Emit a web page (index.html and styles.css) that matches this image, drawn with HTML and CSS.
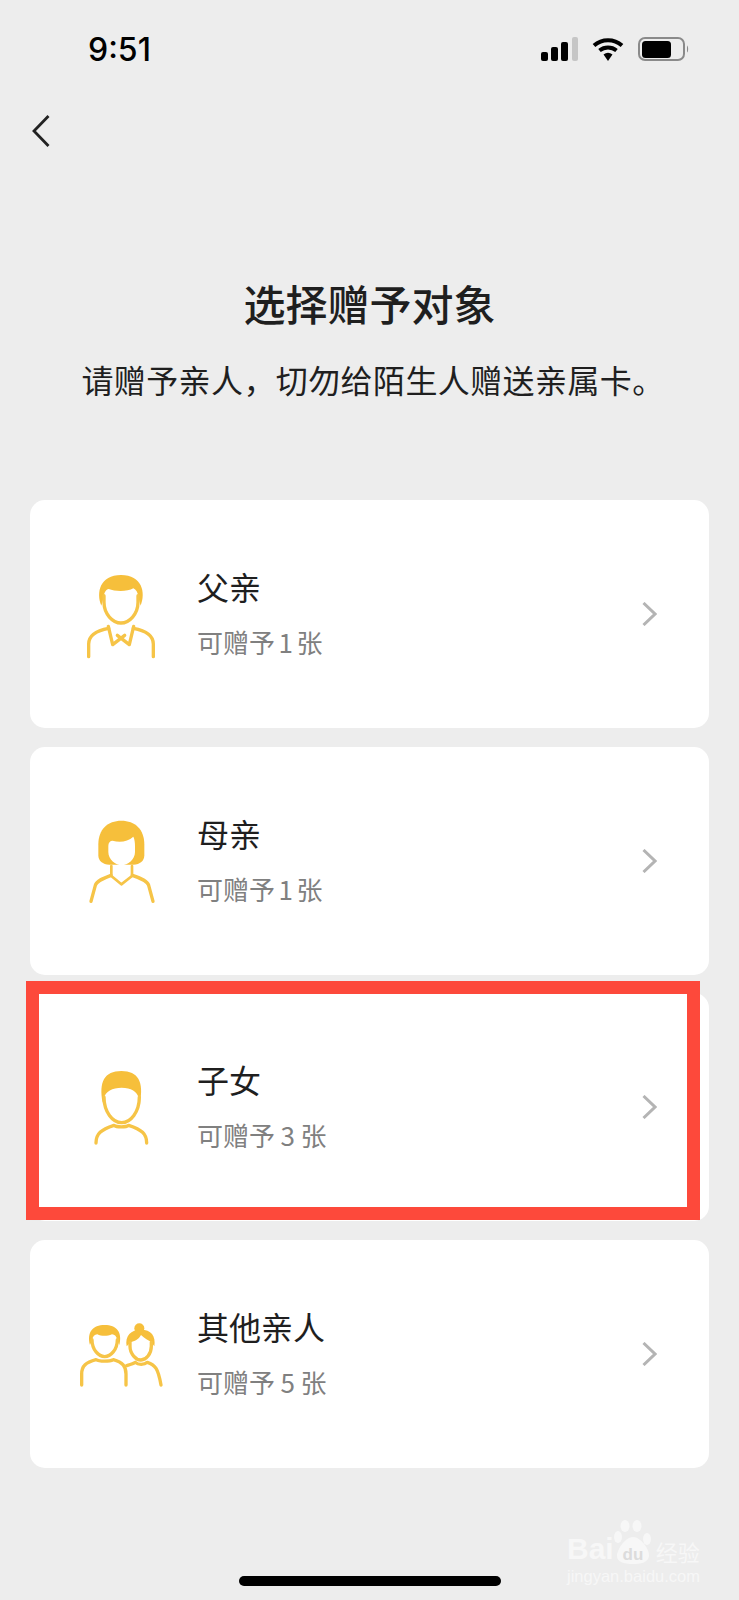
FILE: index.html
```html
<!DOCTYPE html>
<html lang="zh-CN">
<head>
    <meta charset="UTF-8">
    <meta name="viewport" content="width=device-width, initial-scale=1.0">
    <title>选择赠予对象</title>
    <link rel="stylesheet" href="styles.css">
</head>
<body>
    <!-- Status bar -->
    <div class="status-bar">
        <span class="time">9:51</span>
        <div class="status-icons">
            <svg class="signal" width="37" height="24" viewBox="0 0 37 24">
                <rect x="0" y="15" width="7" height="9" rx="2" fill="#000"/>
                <rect x="10" y="10" width="7" height="14" rx="2" fill="#000"/>
                <rect x="20" y="5" width="7" height="19" rx="2" fill="#000"/>
                <rect x="31" y="0" width="6" height="24" rx="2" fill="#c6c6c6"/>
            </svg>
            <svg class="wifi" width="32" height="24" viewBox="0 0 32 24">
                <path d="M2 8.500C10 1.500 22 1.500 30 8.500" fill="none" stroke="#000" stroke-width="4"/>
                <path d="M7.500 13.500C12.500 9.500 19.500 9.500 24.500 13.500" fill="none" stroke="#000" stroke-width="4"/>
                <path d="M11.500 17.500C14.500 15.300 17.500 15.300 20.500 17.500L16 24Z" fill="#000"/>
            </svg>
            <svg class="battery" width="51" height="24" viewBox="0 0 51 24">
                <rect x="1" y="1" width="45" height="22" rx="6" fill="none" stroke="#8a8a8a" stroke-width="2"/>
                <rect x="4" y="4" width="29" height="17" rx="3.500" fill="#000"/>
                <path d="M49 8.500C50.500 9.500 50.500 14.500 49 15.500Z" fill="#8a8a8a"/>
            </svg>
        </div>
    </div>

    <!-- Back button -->
    <div class="nav">
        <svg width="18" height="32" viewBox="0 0 18 32">
            <path d="M16.500 1L2 16L16.500 31" fill="none" stroke="#222" stroke-width="2.800"/>
        </svg>
    </div>

    <div class="page-header">
        <h1>选择赠予对象</h1>
        <p>请赠予亲人，切勿给陌生人赠送亲属卡。</p>
    </div>

    <div class="card-list">
        <!-- Father -->
        <div class="card">
            <svg class="avatar" viewBox="0 0 270 270">
                <path class="hair" d="M76 110C60 70 72 18 135 18C198 18 210 70 194 110L186 82C186 70 180 62 172 58C155 68 118 68 98 60C90 62 84 70 84 82Z"/>
                <path class="line" d="M84 80V100C84 135 110 162 135 162C160 162 186 135 186 100V80"/>
                <path class="line" d="M38 263V225C38 195 65 184 98 178M232 263V225C232 195 205 184 172 178"/>
                <path class="line" d="M97 172L110 227L146 199M173 172L160 227L124 199"/>
            </svg>
            <div class="card-text">
                <div class="name">父亲</div>
                <div class="quota">可赠予<span class="num narrow">1</span>张</div>
            </div>
            <svg class="chevron" width="15" height="24" viewBox="0 0 15 24">
                <path d="M1.500 1L13 12L1.500 23" fill="none" stroke="#b4b4b4" stroke-width="3"/>
            </svg>
        </div>

        <!-- Mother -->
        <div class="card">
            <svg class="avatar" viewBox="0 0 270 270">
                <path class="hair" d="M67 118V85C67 40 95 14 136 14C177 14 205 40 205 85V118C205 135 192 146 172 146H100C80 146 67 135 67 118Z"/>
                <path class="face" d="M97 90C97 80 102 74 110 74C130 80 155 78 172 62C176 70 177 80 177 90V108C177 130 155 148 137 148C119 148 97 130 97 108Z"/>
                <path class="line" d="M45 256L58 208C62 195 78 188 105 178M231 256L218 208C214 195 198 188 169 178"/>
                <path class="line thin" d="M106 150V180L136 205L168 180V150"/>
            </svg>
            <div class="card-text">
                <div class="name">母亲</div>
                <div class="quota">可赠予<span class="num narrow">1</span>张</div>
            </div>
            <svg class="chevron" width="15" height="24" viewBox="0 0 15 24">
                <path d="M1.500 1L13 12L1.500 23" fill="none" stroke="#b4b4b4" stroke-width="3"/>
            </svg>
        </div>

        <!-- Child, marked with the red frame -->
        <div class="card">
            <svg class="avatar" viewBox="0 0 270 270">
                <path class="hair" d="M80 122C68 60 85 27 136 27C187 27 204 60 192 122L188 108C184 88 165 77 137 77C109 77 88 88 84 108Z"/>
                <path class="line" d="M84 105C84 150 110 182 137 182C164 182 190 150 190 105"/>
                <path class="line" d="M60 243C60 215 75 203 114 190C122 196 150 196 158 190C197 203 212 215 212 243"/>
            </svg>
            <div class="card-text">
                <div class="name">子女</div>
                <div class="quota">可赠予<span class="num">3</span>张</div>
            </div>
            <svg class="chevron" width="15" height="24" viewBox="0 0 15 24">
                <path d="M1.500 1L13 12L1.500 23" fill="none" stroke="#b4b4b4" stroke-width="3"/>
            </svg>
            <div class="highlight"></div>
        </div>

        <!-- Other relatives -->
        <div class="card">
            <svg class="avatar" viewBox="0 0 270 270">
                <path class="hair" d="M42 108C32 70 50 48 86 48C122 48 140 70 130 108L124 94C122 82 116 76 108 76C94 82 76 82 64 76C56 76 50 82 48 94Z"/>
                <path class="line" d="M48 92C48 122 68 143 86 143C104 143 124 122 124 92"/>
                <path class="line" d="M17 228V195C17 170 30 160 60 152C70 158 100 158 112 152C140 160 150 172 150 195V228"/>
                <circle class="bun" cx="190" cy="58" r="15"/>
                <path class="hair" d="M152 112C146 80 165 62 195 62C225 62 240 80 235 112L226 100C218 94 205 88 195 78C188 92 175 96 164 100Z"/>
                <path class="line" d="M162 100V112C162 135 180 153 195 153C210 153 226 135 226 112V100"/>
                <path class="line" d="M152 170C165 166 172 164 178 160C186 168 205 168 214 160C238 168 246 178 255 228"/>
            </svg>
            <div class="card-text">
                <div class="name">其他亲人</div>
                <div class="quota">可赠予<span class="num">5</span>张</div>
            </div>
            <svg class="chevron" width="15" height="24" viewBox="0 0 15 24">
                <path d="M1.500 1L13 12L1.500 23" fill="none" stroke="#b4b4b4" stroke-width="3"/>
            </svg>
        </div>
    </div>

    <div class="home-bar"></div>

    <!-- Watermark -->
    <div class="watermark">
        <div class="mark-top">
            <span class="mark-bai">Bai</span>
            <svg class="mark-paw" width="38" height="44" viewBox="0 0 38 44">
                <ellipse cx="11" cy="6" rx="4.500" ry="6"/>
                <ellipse cx="23" cy="6" rx="4.500" ry="6"/>
                <ellipse cx="4" cy="17" rx="4" ry="6"/>
                <ellipse cx="33" cy="19" rx="4" ry="6"/>
                <path d="M19 17C27 17 36 30 35 36C34 43 26 44 19 44C10 44 3 42 3 36C3 30 11 17 19 17Z"/>
                <text class="mark-du" x="19" y="40" text-anchor="middle">du</text>
            </svg>
            <span class="mark-cn">经验</span>
        </div>
        <div class="mark-url">jingyan.baidu.com</div>
    </div>
</body>
</html>
```

FILE: styles.css
```css
body {
    position: relative;
    margin: 0;
    height: 1600px;
    overflow: hidden;
    background-color: #ededed;
    color: #1f1f1f;
    font-family: "Noto Sans CJK SC", "Noto Sans", sans-serif;
}

.status-bar {
    display: flex;
    justify-content: space-between;
    align-items: center;
    height: 98px;
    padding: 0 50px 0 88px;
}

.time {
    font-family: Inter, "Liberation Sans", sans-serif;
    font-size: 32px;
    font-weight: 500;
    color: #000;
}

.status-icons {
    display: flex;
    align-items: center;
    gap: 14px;
}

.nav {
    display: flex;
    padding: 17px 0 0 32px;
}

.page-header {
    margin-top: 131px;
    text-align: center;
}

.page-header h1 {
    margin: 0;
    font-size: 42px;
    font-weight: 500;
    line-height: 50px;
}

.page-header p {
    margin: 31px 0 0;
    padding-left: 7px;
    font-size: 32px;
    font-weight: 400;
    line-height: 40px;
    letter-spacing: 0.400px;
}

.card-list {
    display: flex;
    flex-direction: column;
    gap: 18.500px;
    margin: 101px 30px 0;
}

.card {
    position: relative;
    display: flex;
    align-items: center;
    gap: 31px;
    height: 228px;
    padding: 0 52px 0 46px;
    background-color: #fff;
    border-radius: 15px;
}

.avatar {
    width: 90px;
    height: 90px;
    flex: none;
}

.avatar .hair, .avatar .bun {
    fill: #f6bf3b;
}

.avatar .face {
    fill: #fff;
}

.avatar .line {
    fill: none;
    stroke: #f6c447;
    stroke-width: 10;
    stroke-linecap: round;
    stroke-linejoin: round;
}

.avatar .thin {
    stroke-width: 8;
}

.card-text {
    flex: 1;
    margin-top: -3px;
}

.name {
    font-size: 32px;
    line-height: 40px;
}

.quota {
    margin-top: 19px;
    font-size: 26px;
    line-height: 34px;
    color: #808080;
}

.num {
    margin: 0 5.500px;
}

.num.narrow {
    margin: 0 3.500px;
}

.chevron {
    flex: none;
}

/* red frame drawn over the third card */
.highlight {
    position: absolute;
    top: -12px;
    left: -4px;
    right: 9px;
    bottom: 1px;
    border: 13px solid #fd493b;
}

.home-bar {
    width: 262px;
    height: 10px;
    margin: 108px auto 0;
    background-color: #000;
    border-radius: 5px;
}

.watermark {
    position: absolute;
    left: 567px;
    top: 1520px;
    width: 134px;
    color: #f7f7f7;
}

.mark-top {
    display: flex;
    align-items: flex-end;
    height: 44px;
}

.mark-bai {
    font-family: "Liberation Sans", sans-serif;
    font-size: 30px;
    font-weight: 700;
    line-height: 30px;
}

.mark-paw {
    flex: none;
    fill: #f7f7f7;
}

.mark-du {
    font-family: "Liberation Sans", sans-serif;
    font-size: 17px;
    font-weight: 700;
    fill: #dcdcdc;
}

.mark-cn {
    margin-left: 4px;
    font-size: 22px;
    line-height: 26px;
}

.mark-url {
    margin-top: 2px;
    font-family: "Liberation Sans", sans-serif;
    font-size: 16.500px;
    line-height: 20px;
    white-space: nowrap;
}
```
